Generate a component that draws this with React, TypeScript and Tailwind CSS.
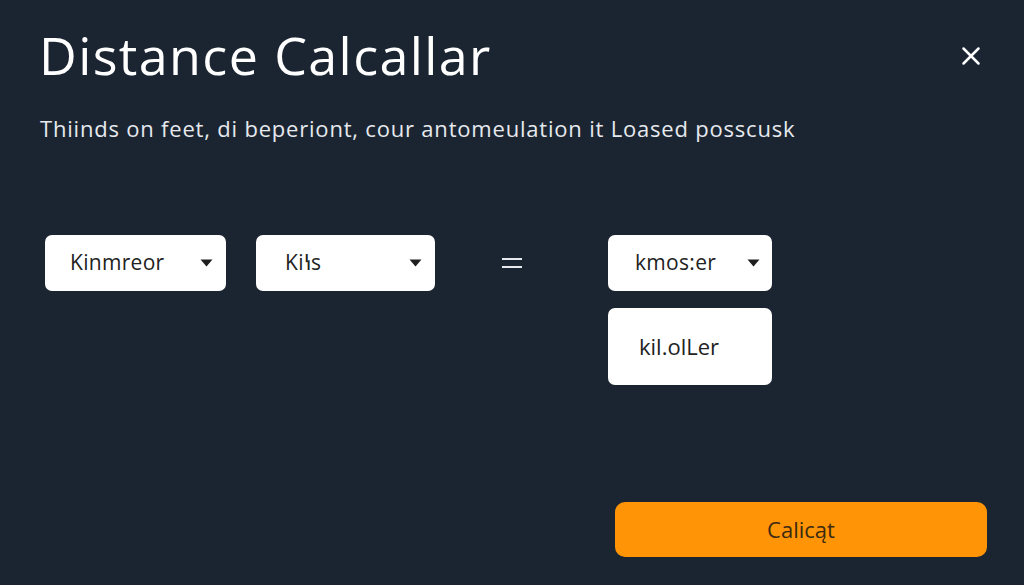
import { X } from 'lucide-react';

function Caret() {
  return (
    <svg width="13" height="8" viewBox="0 0 13 8" className="shrink-0">
      <path d="M0.5 0.5 L12.5 0.5 L6.5 7.5 Z" fill="#1f1f1f" />
    </svg>
  );
}

function Select({ label, width, pad }: { label: string; width: string; pad: string }) {
  return (
    <div
      className={`${width} ${pad} h-[56px] bg-white rounded-[7px] flex items-center justify-between text-[21px] tracking-[0.3px] text-[#222]`}
    >
      <span>{label}</span>
      <Caret />
    </div>
  );
}

export default function App() {
  return (
    <div
      className="w-[1024px] h-[585px] bg-[#1b2531] overflow-hidden flex flex-col relative"
      style={{ fontFamily: '"Open Sans", Lato, sans-serif' }}
    >
      <div className="flex items-start justify-between pl-[39px] pr-[38px] pt-[22px]">
        <h1 className="text-[52px] leading-[66px] tracking-[1.4px] text-white">Distance Calcallar</h1>
        <button className="mt-[19px] text-white">
          <X size={30} strokeWidth={2} />
        </button>
      </div>

      <p className="pl-[40px] mt-[26px] text-[22px] leading-[28px] tracking-[0.8px] text-[#e6e9ee]">
        Thiinds on feet, di beperiont, cour antomeulation it Loased posscusk
      </p>

      <div className="flex items-start mt-[93px] pl-[45px]">
        <Select label="Kinmreor" width="w-[181px]" pad="pl-[25px] pr-[13px]" />
        <div className="ml-[30px]">
          <Select label="Kiꝇs" width="w-[179px]" pad="pl-[29px] pr-[13px]" />
        </div>
        <div className="ml-[67px] w-[20px] h-[56px] flex flex-col justify-center gap-[6px]">
          <div className="h-[2px] bg-[#e6e9ee]" />
          <div className="h-[2px] bg-[#e6e9ee]" />
        </div>
        <div className="ml-[86px] flex flex-col gap-[17px]">
          <Select label="kmos:er" width="w-[164px]" pad="pl-[27px] pr-[12px]" />
          <div className="w-[164px] h-[77px] bg-white rounded-[7px] flex items-center pl-[31px] text-[22px] text-[#222]">
            kil.olLer
          </div>
        </div>
      </div>

      <div className="flex-1" />
      <div className="flex justify-end pr-[37px] pb-[28px]">
        <button className="w-[372px] h-[55px] rounded-[10px] bg-[#ff9506] text-[22px] text-[#3b2a12]">
          Calicąt
        </button>
      </div>
    </div>
  );
}
